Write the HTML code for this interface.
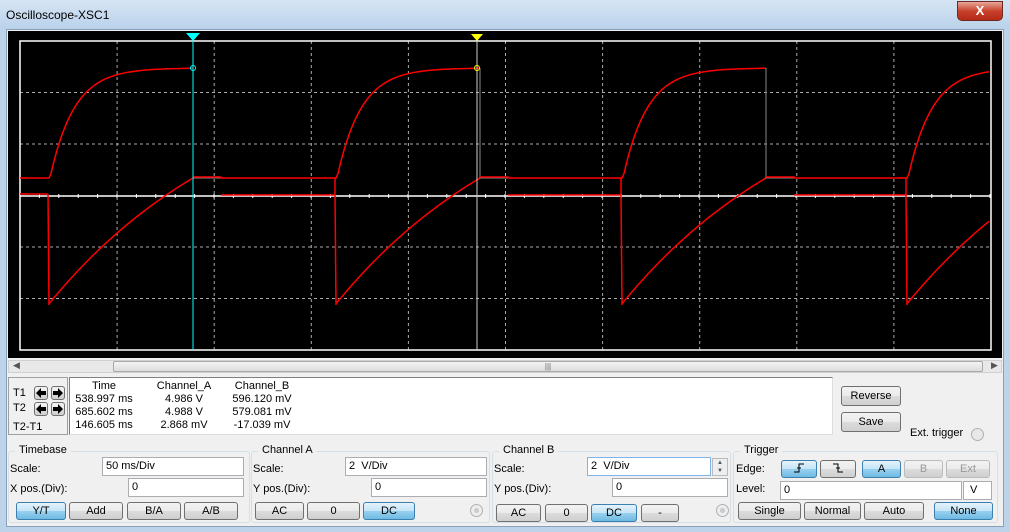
<!DOCTYPE html>
<html><head><meta charset="utf-8"><style>
*{box-sizing:border-box;margin:0;padding:0}
body{width:1010px;height:532px;overflow:hidden;background:#bcd3ea;font-family:"Liberation Sans",sans-serif;font-size:11px;color:#000;position:relative}
.a{position:absolute}
.title{left:0;top:0;width:1010px;height:30px;background:linear-gradient(#d6e5f4,#b9d1ea)}
.close{left:957px;top:1px;width:46px;height:20px;border-radius:0 0 5px 5px;background:linear-gradient(#e8a89a,#c8412b 50%,#b52a18);border:1px solid #6e2a20;color:#fff;font-weight:bold;font-size:13px;text-align:center;line-height:18px}
.panel{left:6px;top:29px;width:998px;height:498px;background:#f0f0f0;border:1px solid #8aa0b8}
.btn{position:absolute;height:18px;border:1px solid #707070;border-radius:3px;background:linear-gradient(#f2f2f2,#ebebeb 50%,#dcdcdc 51%,#cfcfcf);text-align:center;line-height:16px;font-size:11px}
.btn.on{background:linear-gradient(#e5f3fb,#c4e4f6 50%,#98d1ef 51%,#6fb9e2);border-color:#3c7fb1}
.btn svg{display:block;margin:auto}
.in{position:absolute;height:19px;background:#fff;border:1px solid #abadb3;padding-left:8px;line-height:17px}
.grp{position:absolute;border:1px solid #d5dfe5;border-radius:3px}
.grp span{position:absolute;top:-8px;left:6px;background:#f0f0f0;padding:0 4px}
.rad{position:absolute;width:13px;height:13px;border-radius:50%;border:1px solid #b0b0b0;background:radial-gradient(#ccc 30%,#eee 35%)}
</style></head><body>
<div class="a title"></div>
<div class="a" style="left:6px;top:8px;font-size:12px">Oscilloscope-XSC1</div>
<div class="a close">X</div>
<div class="a panel"></div>
<svg class="a" style="left:8px;top:31px" width="994" height="327" id="sc"></svg>
<div class="a" style="left:8px;top:360px;width:994px;height:13px;background:#e8e8e8;border:1px solid #d0d0d0"></div>
<div class="a" style="left:113px;top:361px;width:870px;height:11px;background:linear-gradient(#f4f4f4,#dcdcdc);border:1px solid #a8a8a8;border-radius:2px;text-align:center;font-size:8px;line-height:9px;color:#666">|||</div>
<div class="a" style="left:13px;top:360px;font-size:9px;color:#555">◀</div>
<div class="a" style="left:991px;top:360px;font-size:9px;color:#555">▶</div>
<div class="a" style="left:8px;top:377px;width:60px;height:58px;border:1px solid #a0a0a0"></div>
<div class="a" style="left:13px;top:387px">T1</div>
<div class="a" style="left:13px;top:402px">T2</div>
<div class="a" style="left:13px;top:421px">T2-T1</div>
<div class="btn" style="left:34px;top:386px;width:14px;height:14px"><svg width="12" height="12"><path d="M1 6L6 1V4H11V8H6V11Z" fill="#000"/></svg></div>
<div class="btn" style="left:51px;top:386px;width:14px;height:14px"><svg width="12" height="12"><path d="M11 6L6 1V4H1V8H6V11Z" fill="#000"/></svg></div>
<div class="btn" style="left:34px;top:402px;width:14px;height:14px"><svg width="12" height="12"><path d="M1 6L6 1V4H11V8H6V11Z" fill="#000"/></svg></div>
<div class="btn" style="left:51px;top:402px;width:14px;height:14px"><svg width="12" height="12"><path d="M11 6L6 1V4H1V8H6V11Z" fill="#000"/></svg></div>
<div class="a" style="left:69px;top:377px;width:764px;height:58px;background:#fff;border:1px solid #808080;border-right-color:#ddd;border-bottom-color:#ddd"></div>
<div class="a" style="left:75px;top:380px;line-height:13px;text-align:center;width:58px">Time<br>538.997 ms<br>685.602 ms<br>146.605 ms</div>
<div class="a" style="left:153px;top:380px;line-height:13px;text-align:center;width:62px">Channel_A<br>4.986 V<br>4.988 V<br>2.868 mV</div>
<div class="a" style="left:231px;top:380px;line-height:13px;text-align:center;width:62px">Channel_B<br>596.120 mV<br>579.081 mV<br>-17.039 mV</div>
<div class="btn" style="left:841px;top:386px;width:60px;height:20px;line-height:18px">Reverse</div>
<div class="btn" style="left:841px;top:412px;width:60px;height:20px;line-height:18px">Save</div>
<div class="a" style="left:910px;top:427px">Ext. trigger</div>
<div class="rad" style="left:971px;top:428px;background:#e8e8e8"></div>
<div class="grp" style="left:8px;top:451px;width:242px;height:72px"><span>Timebase</span></div>
<div class="a" style="left:10px;top:463px">Scale:</div>
<div class="in" style="left:102px;top:457px;width:142px;padding-left:3px">50 ms/Div</div>
<div class="a" style="left:10px;top:483px">X pos.(Div):</div>
<div class="in" style="left:128px;top:478px;width:116px;padding-left:3px">0</div>
<div class="btn on" style="left:16px;top:502px;width:50px">Y/T</div>
<div class="btn" style="left:69px;top:502px;width:54px">Add</div>
<div class="btn" style="left:127px;top:502px;width:54px">B/A</div>
<div class="btn" style="left:184px;top:502px;width:54px">A/B</div>
<div class="grp" style="left:251px;top:451px;width:239px;height:72px"><span>Channel A</span></div>
<div class="a" style="left:253px;top:463px">Scale:</div>
<div class="in" style="left:345px;top:457px;width:142px;padding-left:3px">2&nbsp; V/Div</div>
<div class="a" style="left:253px;top:483px">Y pos.(Div):</div>
<div class="in" style="left:371px;top:478px;width:116px;padding-left:3px">0</div>
<div class="btn" style="left:255px;top:502px;width:49px">AC</div>
<div class="btn" style="left:307px;top:502px;width:53px">0</div>
<div class="btn on" style="left:363px;top:502px;width:52px">DC</div>
<div class="rad" style="left:470px;top:504px"></div>
<div class="grp" style="left:492px;top:451px;width:239px;height:72px"><span>Channel B</span></div>
<div class="a" style="left:494px;top:463px">Scale:</div>
<div class="in" style="left:587px;top:457px;width:124px;padding-left:3px;border-color:#7eb4ea">2&nbsp; V/Div</div>
<div class="a" style="left:712px;top:458px;width:16px;height:18px;border:1px solid #bbb;background:#eee;font-size:6px;line-height:8px;text-align:center;color:#456">▲<br>▼</div>
<div class="a" style="left:494px;top:483px">Y pos.(Div):</div>
<div class="in" style="left:612px;top:478px;width:116px;padding-left:3px">0</div>
<div class="btn" style="left:496px;top:504px;width:45px">AC</div>
<div class="btn" style="left:545px;top:504px;width:43px">0</div>
<div class="btn on" style="left:591px;top:504px;width:46px">DC</div>
<div class="btn" style="left:641px;top:504px;width:38px">-</div>
<div class="rad" style="left:716px;top:504px"></div>
<div class="grp" style="left:733px;top:451px;width:265px;height:72px"><span>Trigger</span></div>
<div class="a" style="left:736px;top:463px">Edge:</div>
<div class="btn on" style="left:781px;top:460px;width:36px"><svg width="16" height="14"><path d="M3 11H8V3H13M6 7H10" stroke="#000" fill="none"/></svg></div>
<div class="btn" style="left:820px;top:460px;width:36px"><svg width="16" height="14"><path d="M3 3H8V11H13M6 7H10" stroke="#000" fill="none"/></svg></div>
<div class="btn on" style="left:862px;top:460px;width:39px">A</div>
<div class="btn" style="left:904px;top:460px;width:39px;color:#999;border-color:#bbb">B</div>
<div class="btn" style="left:946px;top:460px;width:44px;color:#999;border-color:#bbb">Ext</div>
<div class="a" style="left:736px;top:483px">Level:</div>
<div class="in" style="left:780px;top:481px;width:182px;padding-left:3px">0</div>
<div class="in" style="left:963px;top:481px;width:29px;padding-left:6px">V</div>
<div class="btn" style="left:738px;top:502px;width:63px">Single</div>
<div class="btn" style="left:804px;top:502px;width:57px">Normal</div>
<div class="btn" style="left:864px;top:502px;width:60px">Auto</div>
<div class="btn on" style="left:934px;top:502px;width:59px">None</div>
<script>
var s=document.getElementById('sc'),h='<rect width="994" height="327" fill="#000"/>';
var L=12,T=10,R=983,B=319;
for(var k=1;k<10;k++){var x=L+97.1*k;h+='<line x1="'+x+'" y1="'+T+'" x2="'+x+'" y2="'+B+'" stroke="#aaa" stroke-dasharray="3,3"/>';}
for(var k=1;k<6;k++){var y=T+51.5*k;if(k!=3)h+='<line x1="'+L+'" y1="'+y+'" x2="'+R+'" y2="'+y+'" stroke="#aaa" stroke-dasharray="3,3"/>';}
h+='<rect x="'+L+'" y="'+T+'" width="'+(R-L)+'" height="'+(B-T)+'" fill="none" stroke="#fff" stroke-width="1.5"/>';
h+='<line x1="'+L+'" y1="165" x2="'+R+'" y2="165" stroke="#fff" stroke-width="1.5"/>';
for(var x=L;x<R;x+=19.4)h+='<line x1="'+x+'" y1="163" x2="'+x+'" y2="167" stroke="#fff"/>';
var ox=-8,oy=-31,X=[48,335,621,906];
function P(a){return a.map(function(p){return (p[0]+ox).toFixed(1)+','+(p[1]+oy).toFixed(1)}).join(' ');}
h+='<polyline fill="none" stroke="#f00" stroke-width="1.5" points="'+P([[20,178],[48,178]])+'"/>';
h+='<polyline fill="none" stroke="#f00" stroke-width="1.5" points="'+P([[20,194],[48,194]])+'"/>';
X.forEach(function(x0,i){
 var end=Math.min(x0+145,990),a=[[x0,178]],b=[[x0,194],[x0+1,305]];
 for(var t=1;x0+t<=end;t+=2){var tt=Math.max(t-2,0);a.push([x0+t,178-110*(1-Math.exp(-tt/24))]);
  b.push([x0+t,305-127*(1-Math.exp(-t/200))/(1-Math.exp(-145/200))]);}
 h+='<polyline fill="none" stroke="#f00" stroke-width="1.5" points="'+P(a)+'"/>';
 h+='<polyline fill="none" stroke="#f00" stroke-width="1.5" points="'+P(b)+'"/>';
 if(x0+145<990){var e=x0+145;
  h+='<polyline fill="none" stroke="#888" points="'+P([[e,68],[e,178],[e+28,178]])+'"/>';
  var nx=i<3?X[i+1]:990;
  h+='<polyline fill="none" stroke="#f00" stroke-width="1.5" points="'+P([[e,177],[e+28,177],[e+28,178],[nx,178],[nx,194]])+'"/>';
  h+='<polyline fill="none" stroke="#f00" stroke-width="1.5" points="'+P([[e+28,195],[nx,195]])+'"/>';}
});
h+='<line x1="'+(193+ox)+'" y1="'+T+'" x2="'+(193+ox)+'" y2="'+B+'" stroke="#0ff"/>';
h+='<line x1="'+(477+ox)+'" y1="'+T+'" x2="'+(477+ox)+'" y2="'+B+'" stroke="#ccc"/>';
h+='<polygon points="'+(186+ox)+',2 '+(200+ox)+',2 '+(193+ox)+',10" fill="#0ff"/>';
h+='<polygon points="'+(471+ox)+',3 '+(483+ox)+',3 '+(477+ox)+',10" fill="#ff0"/>';
h+='<circle cx="'+(193+ox)+'" cy="'+(68+oy)+'" r="2.5" fill="none" stroke="#0ff"/>';
h+='<circle cx="'+(477+ox)+'" cy="'+(68+oy)+'" r="2.5" fill="none" stroke="#ff0"/>';
s.innerHTML=h;
</script>
</body></html>
